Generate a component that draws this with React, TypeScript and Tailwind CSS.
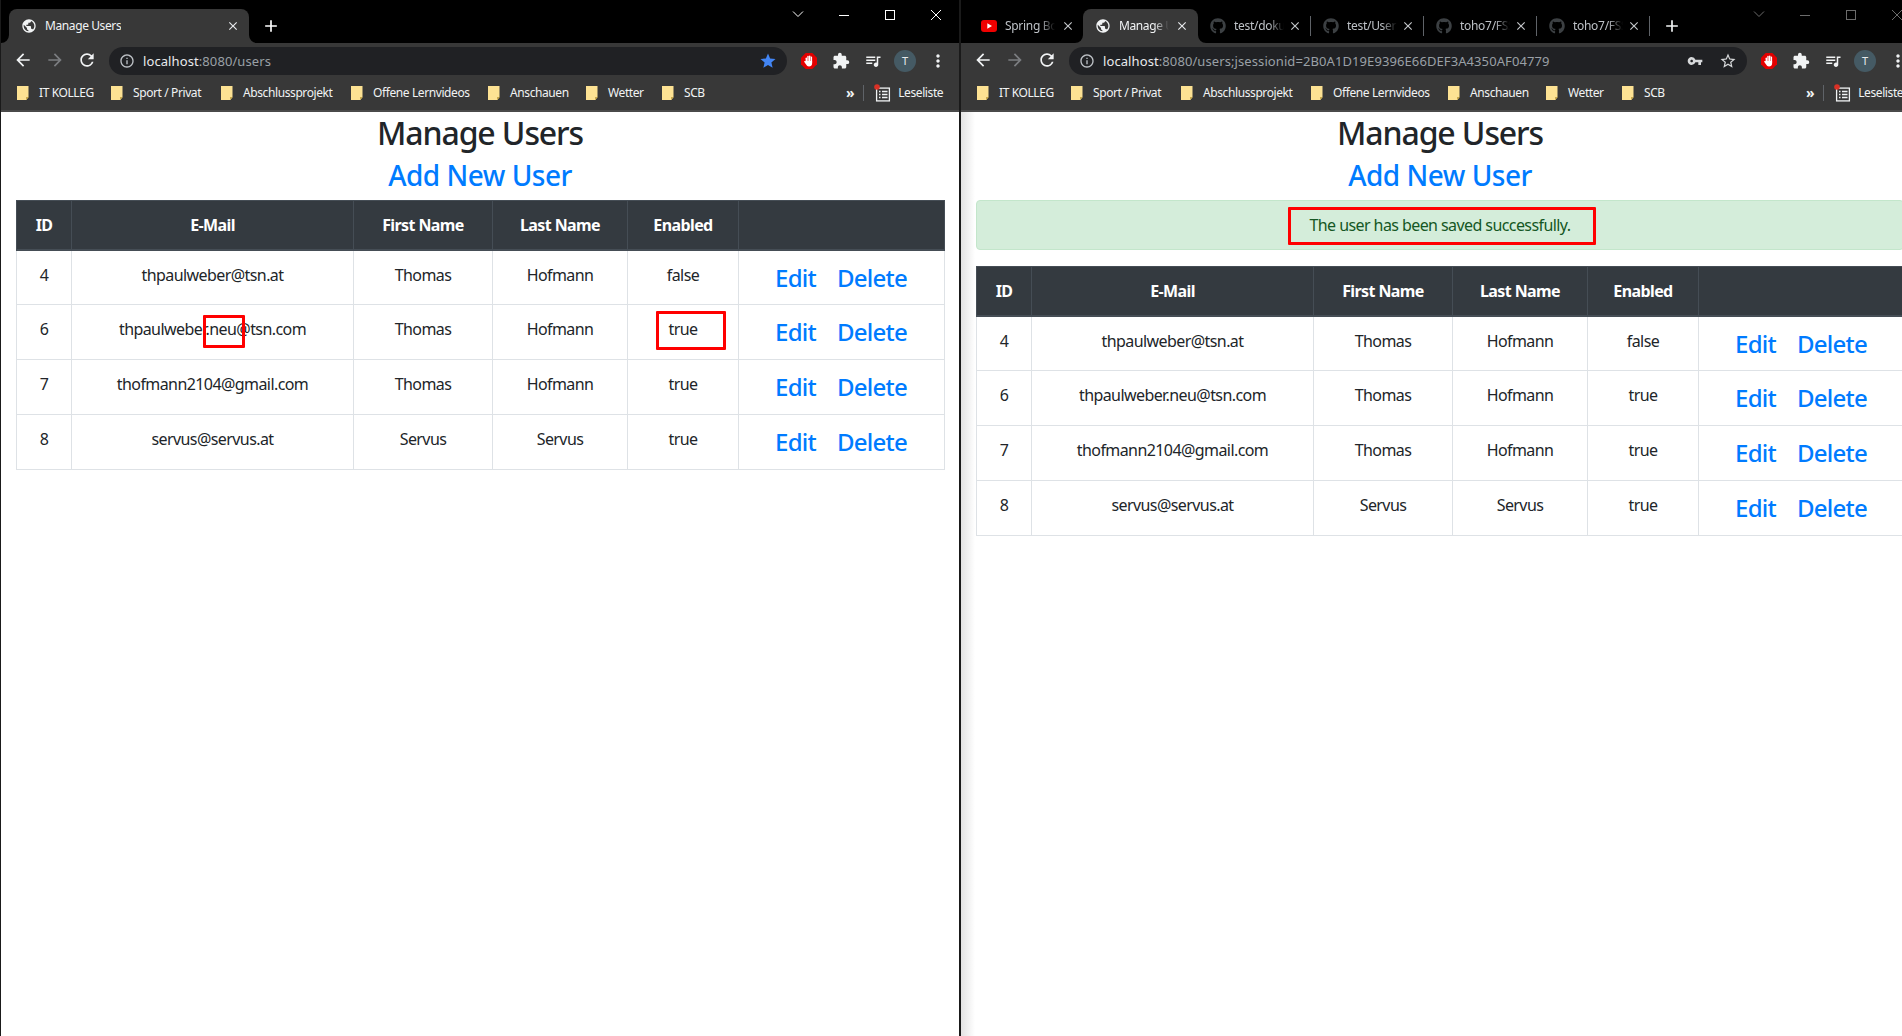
import React from "react";
import { MdExtension, MdQueueMusic, MdVpnKey, MdStar, MdStarBorder, MdPublic, MdMoreVert, MdInfoOutline, MdArrowBack, MdArrowForward, MdRefresh, MdClose, MdAdd } from "react-icons/md";
import { FaGithub } from "react-icons/fa";

const users = [
  { id: 4, email: "thpaulweber@tsn.at", first: "Thomas", last: "Hofmann", enabled: "false" },
  { id: 6, email: "thpaulweber.neu@tsn.com", first: "Thomas", last: "Hofmann", enabled: "true" },
  { id: 7, email: "thofmann2104@gmail.com", first: "Thomas", last: "Hofmann", enabled: "true" },
  { id: 8, email: "servus@servus.at", first: "Servus", last: "Servus", enabled: "true" },
];

const bookmarks = [
  { label: "IT KOLLEG", w: "w-[94px]" },
  { label: "Sport / Privat", w: "w-[110px]" },
  { label: "Abschlussprojekt", w: "w-[130px]" },
  { label: "Offene Lernvideos", w: "w-[137px]" },
  { label: "Anschauen", w: "w-[98px]" },
  { label: "Wetter", w: "w-[76px]" },
  { label: "SCB", w: "w-[60px]" },
];

function Folder() {
  return (
    <svg width="12" height="14" viewBox="0 0 12 14" className="shrink-0">
      <path d="M0 0h11.500v10.500L9.500 14H0z" fill="#fde293" />
      <path d="M9 14v-3h3z" fill="#c9a94e" />
    </svg>
  );
}

function YouTubeIcon() {
  return (
    <svg width="16" height="12" viewBox="0 0 16 12" className="shrink-0">
      <rect width="16" height="12" rx="3" fill="#f00000" />
      <path d="M6.300 3.200v5.600L11 6z" fill="#fff" />
    </svg>
  );
}

function AdBlockIcon() {
  return (
    <svg width="16" height="16" viewBox="0 0 16 16" className="shrink-0">
      <path d="M4.700 0h6.600L16 4.700v6.600L11.300 16H4.700L0 11.300V4.700z" fill="#e20000" />
      <rect x="4.600" y="4.500" width="1.400" height="6" rx="0.700" fill="#fff" />
      <rect x="6.300" y="2.800" width="1.400" height="7" rx="0.700" fill="#fff" />
      <rect x="8" y="2.500" width="1.400" height="7" rx="0.700" fill="#fff" />
      <rect x="9.700" y="3.400" width="1.400" height="7" rx="0.700" fill="#fff" />
      <path d="M4.600 8h6.500v2.500c0 1.900-1.300 3-3.100 3-1.500 0-2.200-.8-2.900-2L3.300 9c-.4-.8.500-1.400 1.100-.7z" fill="#fff" />
    </svg>
  );
}

function ReadingListIcon() {
  return (
    <svg width="18" height="18" viewBox="0 0 18 18" className="shrink-0">
      <rect x="2.600" y="4.100" width="12.800" height="12.800" fill="none" stroke="#f1f3f4" strokeWidth="1.300" />
      <path d="M5 7.500h1.500M8 7.500h5.500M5 10.500h1.500M8 10.500h5.500M5 13.500h1.500M8 13.500h5.500" stroke="#f1f3f4" strokeWidth="1.400" />
      <circle cx="3" cy="3" r="2.800" fill="#d93025" />
    </svg>
  );
}

function Corner({ side }: { side: "l" | "r" }) {
  return (
    <svg width="8" height="8" viewBox="0 0 8 8" className={side === "l" ? "absolute bottom-0 left-[-8px]" : "absolute bottom-0 right-[-8px]"}>
      <path d={side === "l" ? "M8 0v8H0a8 8 0 0 0 8-8z" : "M0 0v8h8a8 8 0 0 1-8-8z"} fill="#383838" />
    </svg>
  );
}

function ActiveTab({ title, width, closeGap }: { title: string; width: string; closeGap: string }) {
  return (
    <div className={`relative flex h-[34px] shrink-0 items-center rounded-t-[8px] bg-[#383838] pl-[12px] ${width}`}>
      <Corner side="l" />
      <Corner side="r" />
      <MdPublic size={16} color="#f1f3f4" className="shrink-0" />
      <span className={`ml-[8px] overflow-hidden whitespace-nowrap text-[12px] tracking-[-0.4px] text-[#f1f3f4] ${closeGap}`}>{title}</span>
      <MdClose size={14} color="#e8eaed" className="absolute right-[9px] top-[10px]" />
    </div>
  );
}

function InactiveTab({ icon, title, separator, width = "w-[113px]", closeRight = "right-[9px]" }: { icon: React.ReactNode; title: string; separator?: boolean; width?: string; closeRight?: string }) {
  return (
    <div className={`relative flex h-[34px] shrink-0 items-center pl-[12px] ${width}`}>
      {icon}
      <span className="ml-[8px] w-[50px] overflow-hidden whitespace-nowrap text-[12px] tracking-[-0.3px] text-[#bdc1c6] [mask-image:linear-gradient(to_right,black_70%,transparent)]">{title}</span>
      <MdClose size={14} color="#c4c7ca" className={`absolute top-[10px] ${closeRight}`} />
      {separator && <span className="absolute right-0 top-[7px] h-[20px] w-px bg-[#5f6368]" />}
    </div>
  );
}

function WindowControls({ dim }: { dim?: boolean }) {
  const c = dim ? "#6b6b6b" : "#ffffff";
  return (
    <div className="absolute right-0 top-0 flex h-[30px] items-center">
      <svg width="46" height="30" viewBox="0 0 46 30"><path d="M18 11.500l5 5 5-5" fill="none" stroke={c} strokeWidth="1" /></svg>
      <svg width="46" height="30" viewBox="0 0 46 30"><path d="M18 15.500h10" stroke={c} strokeWidth="1" /></svg>
      <svg width="46" height="30" viewBox="0 0 46 30"><rect x="18.500" y="10.500" width="9" height="9" fill="none" stroke={c} strokeWidth="1" /></svg>
      <svg width="46" height="30" viewBox="0 0 46 30"><path d="M18 10l10 10M28 10L18 20" stroke={c} strokeWidth="1" /></svg>
    </div>
  );
}

function Toolbar({ url, rest, saved }: { url: string; rest: string; saved?: boolean }) {
  return (
    <div className="flex h-[35px] items-start bg-[#383838] pt-[4px]">
      <div className="flex w-[108px] shrink-0 items-center pt-[3px]">
        <MdArrowBack size={20} color="#f1f3f4" className="ml-[12px]" />
        <MdArrowForward size={20} color="#7b7d80" className="ml-[12px]" />
        <MdRefresh size={20} color="#f1f3f4" className="ml-[12px]" />
      </div>
      <div className="flex h-[28px] w-[678px] shrink-0 items-center rounded-full bg-[#202124] pl-[10px] pr-[10px]">
        <MdInfoOutline size={16} color="#bdc1c6" className="shrink-0" />
        <span className="ml-[8px] mt-[1px] whitespace-nowrap text-[13px] tracking-[0.09px] text-[#e8eaed]">
          {url}
          <span className="text-[#9aa0a6]">{rest}</span>
        </span>
        <span className="flex-1" />
        {saved && <MdVpnKey size={16} color="#d7d9db" className="mr-[16px] shrink-0" />}
        {saved ? <MdStarBorder size={18} color="#d7d9db" className="shrink-0" /> : <MdStar size={18} color="#4285f4" className="shrink-0" />}
      </div>
      <div className="flex shrink-0 items-center pt-[3px]">
        <span className="ml-[14px]"><AdBlockIcon /></span>
        <MdExtension size={18} color="#f1f3f4" className="ml-[15px]" />
        <MdQueueMusic size={18} color="#f1f3f4" className="ml-[14px]" />
        <span className="ml-[12px] flex h-[22px] w-[22px] items-center justify-center rounded-full bg-[#455a64] text-[11px] text-[#e8eaed]">T</span>
        <MdMoreVert size={20} color="#f1f3f4" className="ml-[12px]" />
      </div>
    </div>
  );
}

function Bookmarks() {
  return (
    <div className="flex h-[34px] items-center border-b-[2px] border-[#4a4a4a] bg-[#383838] pb-[2px] pl-[16px] text-[12px] tracking-[-0.4px] text-[#f1f3f4]">
      {bookmarks.map((b) => (
        <div key={b.label} className={`flex shrink-0 items-center ${b.w}`}>
          <Folder />
          <span className="ml-[10px] whitespace-nowrap">{b.label}</span>
        </div>
      ))}
      <span className="ml-[124px] text-[14px] font-bold leading-none">»</span>
      <span className="ml-[9px] h-[16px] w-px bg-[#5f6368]" />
      <span className="ml-[10px]"><ReadingListIcon /></span>
      <span className="ml-[6px] whitespace-nowrap">Leseliste</span>
    </div>
  );
}

const thClass = "h-[49px] border border-[#454d55] border-b-[2px] text-center align-middle text-[16px] font-bold tracking-[-0.6px] text-white";
const tdClass = "h-[55px] border border-[#dee2e6] pt-[12px] text-center align-top text-[16px] leading-[24px] tracking-[-0.58px] text-[#212529]";

function UsersTable() {
  return (
    <table className="w-[928px] table-fixed border-collapse">
      <colgroup>
        <col className="w-[55px]" />
        <col className="w-[282px]" />
        <col className="w-[139px]" />
        <col className="w-[135px]" />
        <col className="w-[111px]" />
        <col className="w-[206px]" />
      </colgroup>
      <thead className="bg-[#343a40]">
        <tr>
          {["ID", "E-Mail", "First Name", "Last Name", "Enabled", ""].map((h) => (
            <th key={h} className={thClass}>{h}</th>
          ))}
        </tr>
      </thead>
      <tbody>
        {users.map((u) => (
          <tr key={u.id}>
            <td className={tdClass}>{u.id}</td>
            <td className={tdClass}>{u.email}</td>
            <td className={tdClass}>{u.first}</td>
            <td className={tdClass}>{u.last}</td>
            <td className={tdClass}>{u.enabled}</td>
            <td className="h-[55px] border border-[#dee2e6] pr-[1px] pt-[12px] text-center align-top text-[24px] font-medium leading-[29px] tracking-[-0.75px] text-[#007bff]">
              <a>Edit</a>
              <a className="ml-[21px]">Delete</a>
            </td>
          </tr>
        ))}
      </tbody>
    </table>
  );
}

function Page({ saved }: { saved?: boolean }) {
  return (
    <div className="relative h-[924px] bg-white px-[15px]">
      <div className="flex w-[928px] flex-col items-center">
        <h2 className="mt-[1px] h-[40px] text-[32px] font-medium leading-[40px] tracking-[-1.1px] text-[#212529]">Manage Users</h2>
        <h3 className="mt-[5px] h-[34px] text-[28px] font-medium leading-[34px] tracking-[-0.5px] text-[#007bff]">Add New User</h3>
      </div>
      {saved && (
        <div className="relative mt-[8px] flex h-[50px] w-[928px] items-center justify-center rounded-[4px] border border-[#c3e6cb] bg-[#d4edda] text-[16px] tracking-[-0.58px] text-[#155724]">
          The user has been saved successfully.
          <span className="absolute left-[311px] top-[6px] h-[38px] w-[308px] rounded-[1px] border-[3px] border-[#ff0000]" />
        </div>
      )}
      <div className={saved ? "mt-[16px]" : "mt-[8px]"}>
        <UsersTable />
      </div>
      {!saved && (
        <>
          <span className="absolute left-[202px] top-[203px] h-[33px] w-[42px] rounded-[1px] border-[3px] border-[#ff0000]" />
          <span className="absolute left-[655px] top-[199px] h-[39px] w-[70px] rounded-[1px] border-[3px] border-[#ff0000]" />
        </>
      )}
      {saved && <span className="absolute inset-y-0 left-0 w-[14px] bg-gradient-to-r from-[#d0d0d0] to-white opacity-60" />}
    </div>
  );
}

function LeftWindow() {
  return (
    <div className="relative w-[960px] shrink-0 overflow-hidden border-l border-r border-[#1a1a1a]">
      <div className="relative flex h-[43px] items-end bg-black pl-[8px]">
        <ActiveTab title="Manage Users" width="w-[240px]" closeGap="" />
        <MdAdd size={20} color="#ffffff" className="mb-[7px] ml-[12px]" />
        <WindowControls />
      </div>
      <Toolbar url="localhost" rest=":8080/users" />
      <Bookmarks />
      <Page />
    </div>
  );
}

function RightWindow() {
  const gh = <FaGithub size={16} color="#3c4043" className="shrink-0" />;
  return (
    <div className="relative w-[960px] shrink-0 overflow-hidden border-l border-[#1a1a1a]">
      <div className="relative flex h-[43px] items-end bg-black pl-[8px]">
        <InactiveTab icon={<YouTubeIcon />} title="Spring Boot" width="w-[114px]" closeRight="right-[8px]" />
        <ActiveTab title="Manage Users" width="w-[115px]" closeGap="w-[50px] [mask-image:linear-gradient(to_right,black_70%,transparent)]" />
        <InactiveTab icon={gh} title="test/dokument" separator />
        <InactiveTab icon={gh} title="test/UserMan" separator />
        <InactiveTab icon={gh} title="toho7/FSST" separator />
        <InactiveTab icon={gh} title="toho7/FSST" separator />
        <MdAdd size={20} color="#f1f3f4" className="mb-[7px] ml-[12px]" />
        <WindowControls dim />
      </div>
      <Toolbar url="localhost" rest=":8080/users;jsessionid=2B0A1D19E9396E66DEF3A4350AF04779" saved />
      <Bookmarks />
      <Page saved />
    </div>
  );
}

export default function App() {
  return (
    <div className="flex h-[1036px] w-[1902px] overflow-hidden bg-white font-['Noto_Sans',sans-serif]">
      <LeftWindow />
      <RightWindow />
    </div>
  );
}
